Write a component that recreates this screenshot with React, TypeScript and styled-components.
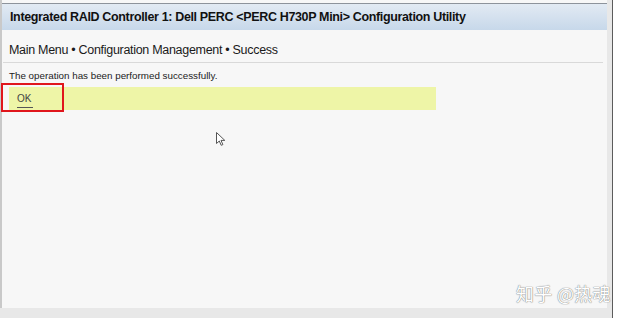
import React from "react"
import styled, { createGlobalStyle } from "styled-components"

const GlobalStyle = createGlobalStyle`
  html, body {
    margin: 0;
    padding: 0;
    background: #ffffff;
  }
  body {
    font-family: "Liberation Sans", Arial, sans-serif;
  }
`

const Screen = styled.div`
  position: relative;
  width: 634px;
  height: 318px;
  display: flex;
  overflow: hidden;
  background: #ffffff;
`

const Frame = styled.div`
  width: 613px;
  height: 318px;
  border-right: 1px solid #5c5c5c;
  background: #e8e8e8;
  padding: 0 5px 10px 0;
  box-sizing: border-box;
  display: flex;
`

const Window = styled.div`
  flex: 1;
  display: flex;
  flex-direction: column;
  background: #f7f7f7;
  border-left: 2px solid #c9c9c9;
  padding-top: 3px;
`

const TitleBar = styled.div`
  height: 26px;
  display: flex;
  align-items: center;
  padding-left: 8px;
  border-top: 1px solid #8d939b;
  background: linear-gradient(#e2eaf3, #c7d8ea);
  font-weight: bold;
  font-size: 12.5px;
  letter-spacing: -0.35px;
  color: #111;
`

const Crumbs = styled.div`
  margin: 0 4px 0 1px;
  padding: 13px 0 5px 6px;
  font-size: 12.5px;
  letter-spacing: -0.3px;
  color: #1a1a1a;
  border-bottom: 1px solid #d9d9d9;
`

const Message = styled.div`
  padding: 7px 0 0 7px;
  font-size: 9.8px;
  color: #222;
`

const ActionBar = styled.div`
  margin: 6px 0 0 7px;
  width: 427px;
  height: 23px;
  background: #eef5a7;
  display: flex;
  align-items: center;
`

const ActionLink = styled.span<{ $focused?: boolean }>`
  margin: 4px 0 0 8px;
  font-size: 10px;
  color: #444;
  padding: 0 2px 3px 0;
  border-bottom: 1px solid ${(p) => (p.$focused ? "#555" : "transparent")};
`

const FocusBox = styled.div`
  position: absolute;
  left: 1px;
  top: 83px;
  width: 59px;
  height: 25px;
  border: 2px solid #e0161c;
`

const Cursor = styled.svg`
  position: absolute;
  left: 216px;
  top: 132px;
`

const Watermark = styled.div`
  position: absolute;
  left: 516px;
  top: 280px;
  font-family: "Noto Sans CJK SC", "Liberation Sans", sans-serif;
  font-size: 18px;
  color: #ffffff;
  letter-spacing: 0.3px;
  text-shadow: 0 0 1px #7f7f7f, 0 0 1px #7f7f7f;
`

const App = () => (
  <Screen>
    <GlobalStyle />
    <Frame>
      <Window>
        <TitleBar>
          Integrated RAID Controller 1: Dell PERC &lt;PERC H730P Mini&gt; Configuration Utility
        </TitleBar>
        <Crumbs>Main Menu • Configuration Management • Success</Crumbs>
        <Message>The operation has been performed successfully.</Message>
        <ActionBar>
          <ActionLink $focused>OK</ActionLink>
        </ActionBar>
      </Window>
    </Frame>
    <FocusBox />
    <Cursor width="12" height="16" viewBox="0 0 12 16">
      <path
        d="M0.5 0.5 L0.5 11.5 L3.3 9 L5.2 13.3 L6.9 12.6 L5 8.4 L8.8 8.4 Z"
        fill="#ffffff"
        stroke="#555"
        strokeWidth="1"
        strokeLinejoin="miter"
      />
    </Cursor>
    <Watermark>知乎 @热魂</Watermark>
  </Screen>
)

export default App
